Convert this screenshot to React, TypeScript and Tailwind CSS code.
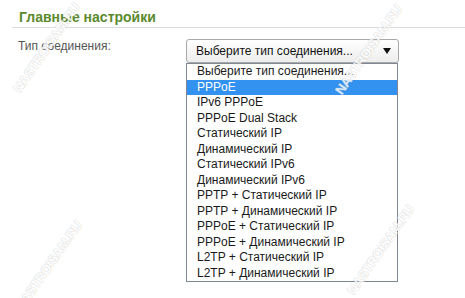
import React from 'react';

const options = [
    'Выберите тип соединения...',
    'PPPoE',
    'IPv6 PPPoE',
    'PPPoE Dual Stack',
    'Статический IP',
    'Динамический IP',
    'Статический IPv6',
    'Динамический IPv6',
    'PPTP + Статический IP',
    'PPTP + Динамический IP',
    'PPPoE + Статический IP',
    'PPPoE + Динамический IP',
    'L2TP + Статический IP',
    'L2TP + Динамический IP',
];

// faint site stamp laid over the screenshot
function Watermark({ className }: { className: string }) {
    return (
        <span
            aria-hidden
            className={`pointer-events-none absolute -rotate-[55deg] select-none text-[13px] font-bold tracking-tight text-white opacity-80 [text-shadow:0_0_1px_#c4c4c4,0_0_1px_#c4c4c4] ${className}`}
        >
            NASTROISAM.RU
        </span>
    );
}

export default function App() {
    const selected = 1;

    return (
        <div className="relative h-[298px] w-[465px] overflow-hidden bg-white font-['Liberation_Sans',Arial,sans-serif]">
            <div className="pl-[12px] pt-[9px]">
                <div className="border-b border-[#dcdcdc] pb-[2px] pl-[7px]">
                    <h2 className="text-[14px] font-bold leading-[16px] text-[#5b8a2e]">Главные настройки</h2>
                </div>
            </div>

            <div className="flex pl-[18px] pt-[10px]">
                <div className="w-[168px] text-[12px] leading-[16px] text-[#555]">Тип соединения:</div>

                <div className="flex flex-col pt-[1px]">
                    <div className="flex h-[24px] w-[213px] items-center justify-between rounded-[3px] border border-[#a9a9a9] bg-gradient-to-b from-white to-[#ededed] pl-[9px] pr-[7px]">
                        <span className="text-[12px] text-[#111]">Выберите тип соединения...</span>
                        <svg width="8" height="6" viewBox="0 0 8 6">
                            <path d="M0 0H8L4 6Z" fill="#111" />
                        </svg>
                    </div>
                    <ul className="w-[212px] border border-[#7f8794] bg-white">
                        {options.map((o, i) => (
                            <li
                                key={o}
                                className={`pl-[10px] text-[12px] leading-[15.5px] ${i === selected ? 'bg-[#3391f0] text-white' : 'text-[#1a1a1a]'}`}
                            >
                                {o}
                            </li>
                        ))}
                    </ul>
                </div>
            </div>

            <Watermark className="left-[-6px] top-[38px]" />
            <Watermark className="left-[316px] top-[40px]" />
            <Watermark className="left-[328px] top-[240px]" />
            <Watermark className="left-[-4px] top-[256px]" />
        </div>
    );
}
